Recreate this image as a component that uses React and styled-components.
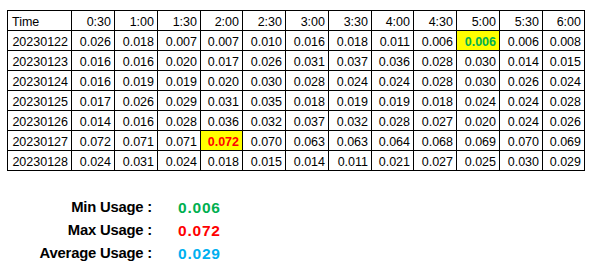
import React from 'react';
import styled, { createGlobalStyle } from 'styled-components';

const times = ['0:30', '1:00', '1:30', '2:00', '2:30', '3:00', '3:30', '4:00', '4:30', '5:00', '5:30', '6:00'];

const rows = [
	['20230122', ['0.026', '0.018', '0.007', '0.007', '0.010', '0.016', '0.018', '0.011', '0.006', '0.006', '0.006', '0.008']],
	['20230123', ['0.016', '0.016', '0.020', '0.017', '0.026', '0.031', '0.037', '0.036', '0.028', '0.030', '0.014', '0.015']],
	['20230124', ['0.016', '0.019', '0.019', '0.020', '0.030', '0.028', '0.024', '0.024', '0.028', '0.030', '0.026', '0.024']],
	['20230125', ['0.017', '0.026', '0.029', '0.031', '0.035', '0.018', '0.019', '0.019', '0.018', '0.024', '0.024', '0.028']],
	['20230126', ['0.014', '0.016', '0.028', '0.036', '0.032', '0.037', '0.032', '0.028', '0.027', '0.020', '0.024', '0.026']],
	['20230127', ['0.072', '0.071', '0.071', '0.072', '0.070', '0.063', '0.063', '0.064', '0.068', '0.069', '0.070', '0.069']],
	['20230128', ['0.024', '0.031', '0.024', '0.018', '0.015', '0.014', '0.011', '0.021', '0.027', '0.025', '0.030', '0.029']]
];

// cells picked out in the sheet: [row, col] -> colour
const marks = {
	'0-9': '#00b050',
	'5-3': '#ff0000'
};

const summary = [
	['Min Usage :', '0.006', '#00b050'],
	['Max Usage :', '0.072', '#ff0000'],
	['Average Usage :', '0.029', '#00b0f0']
];

const GlobalStyle = createGlobalStyle`
	body {
		margin: 0;
		background: #fff;
		font-family: "Liberation Sans", Arial, sans-serif;
		color: #000;
	}
`;

const Page = styled.div`
	padding: 10px 0 0 7px;
`;

const Sheet = styled.div`
	display: inline-grid;
	grid-template-columns: 63px repeat(3, 42px 42px 42px 41px);
	grid-auto-rows: 19px;
	gap: 1px;
	padding: 1px;
	background: #000;
`;

const Cell = styled.div`
	background: ${props => props.mark ? '#ffff00' : '#fff'};
	color: ${props => props.mark || '#000'};
	font-weight: ${props => props.mark ? 'bold' : 'normal'};
	font-size: 12.5px;
	line-height: 19px;
	padding: 2px ${props => props.left ? '0 0 4px' : '3px 0 0'};
	box-sizing: border-box;
	text-align: ${props => props.left ? 'left' : 'right'};
	white-space: nowrap;
	overflow: hidden;
`;

const Summary = styled.div`
	display: grid;
	grid-template-columns: 145px auto;
	column-gap: 26px;
	grid-auto-rows: 23px;
	margin-top: 25px;
	font-weight: bold;
	font-size: 14.8px;
	line-height: 23px;
`;

const Label = styled.div`
	text-align: right;
	letter-spacing: -0.2px;
`;

const Value = styled.div`
	color: ${props => props.color};
	font-size: 15.5px;
	letter-spacing: 0.8px;
`;

export default function App() {
	return (
		<Page>
			<GlobalStyle />
			<Sheet>
				<Cell left>Time</Cell>
				{times.map(t => <Cell key={t}>{t}</Cell>)}
				{rows.map(([date, values], r) => (
					<React.Fragment key={date}>
						<Cell>{date}</Cell>
						{values.map((v, c) => (
							<Cell key={c} mark={marks[`${r}-${c}`]}>{v}</Cell>
						))}
					</React.Fragment>
				))}
			</Sheet>
			<Summary>
				{summary.map(([label, value, color]) => (
					<React.Fragment key={label}>
						<Label>{label}</Label>
						<Value color={color}>{value}</Value>
					</React.Fragment>
				))}
			</Summary>
		</Page>
	);
}
